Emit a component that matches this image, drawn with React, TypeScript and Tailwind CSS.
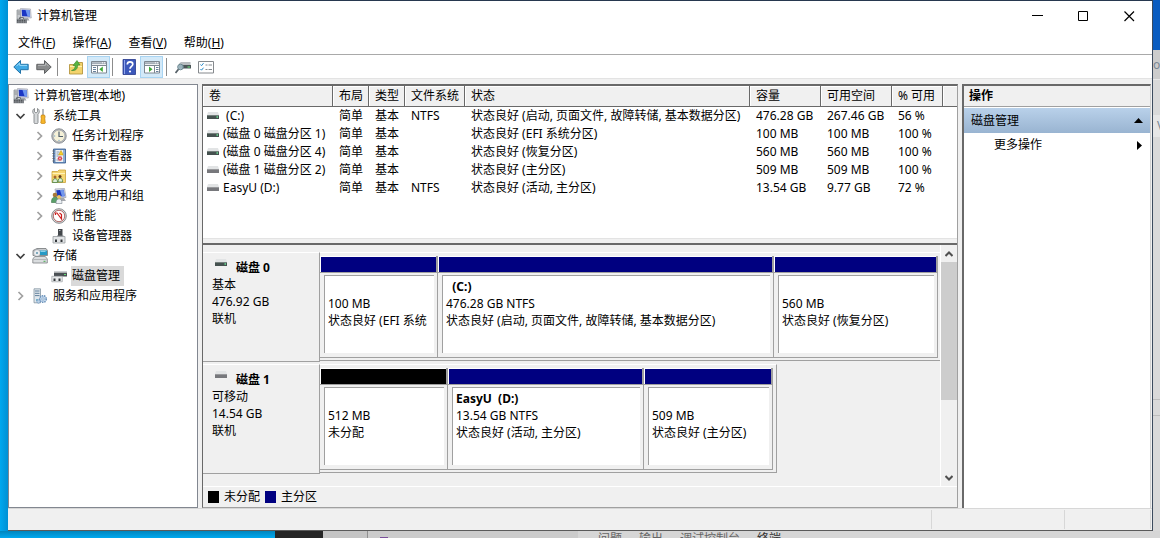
import type { ReactNode } from "react";

type IconName =
  | "computer"
  | "tools"
  | "clock"
  | "event"
  | "shared"
  | "users"
  | "perf"
  | "device"
  | "storage"
  | "disk"
  | "services";

type TreeItem = {
  label: string;
  icon: IconName;
  level: number;
  state?: "open" | "closed";
  selected?: boolean;
};

type Volume = {
  name: string;
  removable?: boolean;
  fs: string;
  status: string;
  capacity: string;
  free: string;
  percent: string;
};

type PartitionInfo = {
  title?: string;
  size: string;
  status: string;
  unallocated?: boolean;
};

const menus = [
  { label: "文件", key: "F" },
  { label: "操作", key: "A" },
  { label: "查看", key: "V" },
  { label: "帮助", key: "H" },
];

const tree: TreeItem[] = [
  { label: "计算机管理(本地)", icon: "computer", level: 0 },
  { label: "系统工具", icon: "tools", level: 1, state: "open" },
  { label: "任务计划程序", icon: "clock", level: 2, state: "closed" },
  { label: "事件查看器", icon: "event", level: 2, state: "closed" },
  { label: "共享文件夹", icon: "shared", level: 2, state: "closed" },
  { label: "本地用户和组", icon: "users", level: 2, state: "closed" },
  { label: "性能", icon: "perf", level: 2, state: "closed" },
  { label: "设备管理器", icon: "device", level: 2 },
  { label: "存储", icon: "storage", level: 1, state: "open" },
  { label: "磁盘管理", icon: "disk", level: 2, selected: true },
  { label: "服务和应用程序", icon: "services", level: 1, state: "closed" },
];

const columns = ["卷", "布局", "类型", "文件系统", "状态", "容量", "可用空间", "% 可用", ""];

const volumes: Volume[] = [
  { name: " (C:)", fs: "NTFS", status: "状态良好 (启动, 页面文件, 故障转储, 基本数据分区)", capacity: "476.28 GB", free: "267.46 GB", percent: "56 %" },
  { name: "(磁盘 0 磁盘分区 1)", fs: "", status: "状态良好 (EFI 系统分区)", capacity: "100 MB", free: "100 MB", percent: "100 %" },
  { name: "(磁盘 0 磁盘分区 4)", fs: "", status: "状态良好 (恢复分区)", capacity: "560 MB", free: "560 MB", percent: "100 %" },
  { name: "(磁盘 1 磁盘分区 2)", removable: true, fs: "", status: "状态良好 (主分区)", capacity: "509 MB", free: "509 MB", percent: "100 %" },
  { name: "EasyU (D:)", removable: true, fs: "NTFS", status: "状态良好 (活动, 主分区)", capacity: "13.54 GB", free: "9.77 GB", percent: "72 %" },
];

const disk0: PartitionInfo[] = [
  { size: "100 MB", status: "状态良好 (EFI 系统" },
  { title: "  (C:)", size: "476.28 GB NTFS", status: "状态良好 (启动, 页面文件, 故障转储, 基本数据分区)" },
  { size: "560 MB", status: "状态良好 (恢复分区)" },
];

const disk1: PartitionInfo[] = [
  { size: "512 MB", status: "未分配", unallocated: true },
  { title: "EasyU  (D:)", size: "13.54 GB NTFS", status: "状态良好 (活动, 主分区)" },
  { size: "509 MB", status: "状态良好 (主分区)" },
];

function Svg({ children }: { children: ReactNode }) {
  return (
    <svg width="16" height="16" viewBox="0 0 16 16" className="shrink-0" aria-hidden="true">
      {children}
    </svg>
  );
}

function ComputerIcon() {
  return (
    <Svg>
      <path d="M1 2h3.500v9H1z" fill="#c9ccd0" stroke="#85898e" strokeWidth=".7" />
      <path d="M1.500 4h2.500M1.500 6h2.500" stroke="#73777c" strokeWidth=".7" />
      <path d="M4.500.5 14.500 1l.8 9-10.300-.5z" fill="#d8dbe4" stroke="#9a9eaa" strokeWidth=".6" />
      <path d="M5.700 1.800 13.500 2l.6 6.500-8-.3z" fill="#1b36c4" />
      <path d="m9.500 2 4 .1.600 6.400-2.600-.2z" fill="#6f97f0" />
      <path d="M8 10h4l1.500 2.500H8z" fill="#a4a8ae" />
      <path d="M.5 11h10.500v4.300H.5z" fill="#8d9196" />
      <path d="M1 12.300h9.500M1 14h9.500" stroke="#42464a" strokeDasharray="1.500 .8" />
      <path d="M3.500 10.800v-1h4v1" fill="none" stroke="#55595e" />
    </Svg>
  );
}

function TreeIcon({ name }: { name: IconName }) {
  switch (name) {
    case "computer":
      return <ComputerIcon />;
    case "tools":
      return (
        <Svg>
          <path d="M2.500.5v3.300L4 5l1.500-1.200V.5C7.500 1.500 8 4.500 6 6.300V14.500a2 1.300 0 0 1-4 0V6.300C0 4.500.5 1.500 2.500.5z" fill="#d5d8da" stroke="#777b7e" strokeWidth=".8" />
          <path d="M11 1v6.500" stroke="#8f9396" strokeWidth="1.300" />
          <path d="M9.500 7h3l.7 2-.5 1 .6 5a2.300 1 0 0 1-4.500 0l.6-5-.5-1z" fill="#f5b52a" stroke="#c07c0c" strokeWidth=".7" />
        </Svg>
      );
    case "clock":
      return (
        <Svg>
          <circle cx="8" cy="8" r="7.200" fill="#b5b9bd" stroke="#8d9195" strokeWidth="1" />
          <circle cx="8" cy="8" r="5.800" fill="#f5f1d8" stroke="#a2a5aa" strokeWidth=".6" />
          <path d="M8 3.500v5h4" fill="none" stroke="#51606e" strokeWidth="1.200" />
          <path d="M8 13v-1.200M3 8h1.200" stroke="#6aa0c8" />
        </Svg>
      );
    case "event":
      return (
        <Svg>
          <path d="M2.500 1h12v14h-12z" fill="#6e93c4" stroke="#365b8e" strokeWidth=".8" />
          <path d="M4.500 2h7.500v12H4.500z" fill="#eef2f4" />
          <path d="M1.500 3h2M1.500 5.500h2M1.500 8h2M1.500 10.500h2M1.500 13h2" stroke="#5f6468" />
          <path d="M5.500 4h3M5.500 6h2M5.500 8h2M5.500 12h2" stroke="#6a85a8" strokeWidth=".8" />
          <path d="m10 2.500 2.500 4.500h-5z" fill="#f6cf2b" stroke="#b58c0e" strokeWidth=".5" />
          <circle cx="9" cy="10.500" r="2.300" fill="#d43f4b" />
          <path d="m8 9.500 2 2m0-2-2 2" stroke="#fff" strokeWidth=".7" />
          <path d="M13 2v12" stroke="#b6cce6" />
        </Svg>
      );
    case "shared":
      return (
        <Svg>
          <path d="M1 3.500h5.500L8 2h6.500v12.500H1z" fill="#f6d672" stroke="#caa23a" strokeWidth=".8" />
          <path d="M1.500 5.500h12.500" stroke="#fff2ba" />
          <circle cx="4" cy="9" r="1.500" fill="#a7652e" />
          <circle cx="9" cy="8.500" r="1.500" fill="#653b1d" />
          <path d="M1.500 14.500c.3-3 1.300-3.800 2.800-3.800s2.200 1 2.200 3.800zM7 14c.3-3 1-3.800 2.400-3.800s2.200 1 2.200 3.800z" fill="#dfecd6" stroke="#377a3e" strokeWidth=".7" />
        </Svg>
      );
    case "users":
      return (
        <Svg>
          <path d="m4 1 9.500-.5 1.500 9-9.500.5z" fill="#dadee8" stroke="#969baa" strokeWidth=".7" />
          <path d="m5.200 2.200 7.500-.4 1 6.400-7.500.4z" fill="#1d39be" />
          <path d="m9 2 3.700-.2 1 6.400-2.700.2z" fill="#7297ec" />
          <path d="M9 10h4l2 3H9z" fill="#a5a8ad" />
          <circle cx="4" cy="7" r="2.300" fill="#a97a38" />
          <path d="M.5 14.500c0-4 1.300-5.300 3.500-5.300s3.500 1.300 3.500 5.300z" fill="#5aa069" stroke="#396e47" strokeWidth=".6" />
          <circle cx="8" cy="9" r="1.900" fill="#efc35a" />
          <path d="M5 15.500c0-3.500 1-4.600 3-4.600s3 1.100 3 4.600z" fill="#edf1f5" stroke="#7b858f" strokeWidth=".6" />
        </Svg>
      );
    case "perf":
      return (
        <Svg>
          <circle cx="8" cy="8" r="7.300" fill="#dcdcdc" stroke="#808284" strokeWidth=".9" />
          <circle cx="8" cy="8" r="5.700" fill="#fff" stroke="#a04a4a" strokeWidth=".8" />
          <path d="M4.500 7V5h1.500l4.500 6V6.500L8.500 5" fill="none" stroke="#cf2020" strokeWidth="1.200" />
        </Svg>
      );
    case "device":
      return (
        <Svg>
          <path d="M7 1h4.500v7H7z" fill="#43474b" />
          <path d="M8 2.500h1.500" stroke="#b3b7ba" />
          <path d="M6 7.500h6.500V9H6z" fill="#7c8084" />
          <path d="M2 8.500h12V15H2z" fill="#e2e4e6" stroke="#989c9f" strokeWidth=".8" />
          <path d="M4 11.500h2V14H4zM9.500 11.500h2V14h-2z" fill="#33373a" />
        </Svg>
      );
    case "storage":
      return (
        <Svg>
          <path d="M1 2.500 5 .5h9l1.500 2v5H1z" fill="#c8cbce" stroke="#73777a" strokeWidth=".8" />
          <circle cx="5" cy="5" r="3.500" fill="#e9ecef" stroke="#8f9498" strokeWidth=".7" />
          <circle cx="5" cy="5" r="1" fill="#5d95ac" />
          <path d="M8 2.500h7V7H8z" fill="#2599c5" />
          <path d="M8.500 3.300h5" stroke="#a4def3" />
          <path d="m.8 11 2-2.500h10.500l2 2.500v4H.8z" fill="#dadddf" stroke="#7d8184" strokeWidth=".8" />
          <path d="M1.500 11.500h13" stroke="#a8acaf" strokeWidth=".8" />
          <path d="M11.500 13.300h2" stroke="#4bae52" />
        </Svg>
      );
    case "disk":
      return (
        <Svg>
          <path d="M3 4.500h13v4H3z" fill="#4b5054" />
          <path d="M3 3.800h13" stroke="#b9bdc0" />
          <path d="M13 6.500h2" stroke="#66dd77" />
          <path d="M.8 8.300h10.500v5.500H.8z" fill="#e7e9ea" stroke="#a0a4a7" strokeWidth=".7" />
          <path d="M2.500 10.500h2V13h-2zM7.500 10.500h2V13h-2z" fill="#35393c" />
        </Svg>
      );
    case "services":
      return (
        <Svg>
          <path d="M2 .8h6.500v14H2z" fill="#dfe6ec" stroke="#8494a2" strokeWidth=".8" />
          <path d="M3 3h4.500M3 5.300h4.500M3 7.600h4.500" stroke="#62809c" />
          <circle cx="5" cy="12" r="1" fill="#56a5c4" />
          <circle cx="11" cy="11" r="3.300" fill="#c8dcf0" stroke="#6c93bb" strokeWidth="1.500" strokeDasharray="1.500 .8" />
          <circle cx="11" cy="11" r="1.200" fill="#fff" stroke="#6c93bb" strokeWidth=".7" />
          <circle cx="6.500" cy="13.500" r="1.700" fill="#bdd3e8" stroke="#6c93bb" strokeDasharray="1 .6" />
        </Svg>
      );
  }
}

function DriveIcon({ removable }: { removable?: boolean }) {
  return (
    <svg width="14" height="9" viewBox="0 0 14 9" className="shrink-0" aria-hidden="true">
      <path d="M2 0h10l1 3H1z" fill="#e2e4e5" />
      <path d="M1 3h12v4H1z" fill={removable ? "#77787c" : "#45514f"} />
      <path d="M1 3.500h12" stroke={removable ? "#98999c" : "#75807d"} />
      {!removable && <path d="M10.500 5h1.500" stroke="#6be396" strokeWidth="1.500" />}
    </svg>
  );
}

function Arrow({ back }: { back?: boolean }) {
  return (
    <Svg>
      <path
        d={back ? "M.8 8 7.500 1.500v3.800h7.700v5.400H7.500v3.800z" : "M15.200 8 8.500 1.500v3.800H.8v5.400h7.700v3.800z"}
        fill={back ? "#3fa9e4" : "#898b8c"}
        stroke={back ? "#2273a8" : "#5f6162"}
        strokeLinejoin="round"
      />
      <path d={back ? "M3.500 7.200 6.700 4v2.400h7.300" : "M2 6.400h7.500V4l3 3.200"} fill="none" stroke={back ? "#9bdbfa" : "#b3b5b6"} />
    </Svg>
  );
}

function PaneIcon({ right }: { right?: boolean }) {
  return (
    <Svg>
      <path d="M.5 2.500h15v11.500H.5z" fill="#fff" stroke="#7d8791" />
      <path d="M1 4.200h14" stroke="#a4adb7" strokeWidth="2" />
      <path d="M11 3.800h1M13 3.800h1" stroke="#fff" />
      <path d="M1 6.500h14" stroke="#7d8791" />
      <path d={right ? "M10.500 6.500V14" : "M6.500 6.500V14"} stroke="#7d8791" />
      <path d={right ? "M12 8.500h2.500M12 10.500h2.500M12 12.500h2.500" : "M2 8.500h3M2 10.500h3M2 12.500h3"} stroke="#67809b" />
      <path d={right ? "M5 7.500v5.500l3.500-2.700z" : "M11.800 7.500v5.500L8.300 10.300z"} fill="#3ca735" />
    </Svg>
  );
}

function FolderUpIcon() {
  return (
    <Svg>
      <path d="M1.500 5.500h5l1.500-2h6.500v11.500h-13z" fill="#f3d36c" stroke="#b59640" strokeWidth=".9" />
      <path d="M2 7.500h12" stroke="#fff0b0" />
      <path d="M3.500 11.500c2.700-.8 3.600-2.300 3.700-5H5l4-5L12 6H9.700c0 4-2.200 6-6.200 5.500z" fill="#58b543" stroke="#388529" strokeWidth=".6" />
    </Svg>
  );
}

function HelpIcon() {
  return (
    <Svg>
      <path d="M2 .5h12.500v15H2z" fill="#3c58bb" stroke="#27398b" strokeWidth=".8" />
      <path d="M3.500 1v14" stroke="#8ea4ec" />
      <path d="M6.300 5.500C6.300 2 11.800 2.200 11.800 5.300c0 2-2.800 2.200-2.800 4.500" fill="none" stroke="#fff" strokeWidth="1.700" />
      <circle cx="9" cy="12.500" r="1.100" fill="#fff" />
    </Svg>
  );
}

function ProbeIcon() {
  return (
    <Svg>
      <path d="M4 4.500 6 3h9.500v6H5z" fill="#b9bdc0" />
      <path d="M4 6h12v3.500H4z" fill="#4c5658" />
      <path d="M12.500 8h2.500" stroke="#64c978" strokeWidth="1.300" />
      <circle cx="5.500" cy="8" r="2.800" fill="#a3bdc7" fillOpacity=".9" stroke="#6b8790" />
      <path d="m3.500 10.200-3 3.800" stroke="#535e65" strokeWidth="1.700" />
    </Svg>
  );
}

function ChecklistIcon() {
  return (
    <Svg>
      <path d="M.5 2.500h15v11.500H.5z" fill="#fff" stroke="#85898d" />
      <path d="m2.500 5.500 1 1.200 2-2.500M2.500 10l1 1.200 2-2.500" fill="none" stroke="#258bcc" />
      <path d="M7.500 6h2M10.500 6h3.500M7.500 10.500h2M10.500 10.500h3.500" stroke="#858b90" />
    </Svg>
  );
}

function Chevron({ open }: { open: boolean }) {
  return (
    <svg width="11" height="10" viewBox="0 0 11 10" aria-hidden="true">
      <path d={open ? "M1.500 3l4 4 4-4" : "M3.500 1l4 4-4 4"} fill="none" stroke={open ? "#404040" : "#a0a0a0"} strokeWidth="1.700" />
    </svg>
  );
}

function ToolButton({ label, active, children }: { label: string; active?: boolean; children: ReactNode }) {
  return (
    <button
      aria-label={label}
      className={`flex h-[22px] w-[23px] shrink-0 items-center justify-center border ${
        active ? "border-[#a8d4f2] bg-[#d3e9f8]" : "border-transparent"
      }`}
    >
      {children}
    </button>
  );
}

function Separator() {
  return <span className="h-[18px] w-px shrink-0 bg-[#8c8c8c]" />;
}

function TreeRow({ item }: { item: TreeItem }) {
  const indent = item.level === 0 ? "pl-1" : item.level === 1 ? "pl-[6px]" : "pl-[25px]";
  return (
    <li className={`flex h-5 items-center ${indent}`}>
      {item.level > 0 && (
        <span className="flex w-[17px] shrink-0">
          {item.state && (
            <button aria-label={`展开或折叠 ${item.label}`}>
              <Chevron open={item.state === "open"} />
            </button>
          )}
        </span>
      )}
      <button className="flex h-5 items-center gap-1">
        <TreeIcon name={item.icon} />
        <span className={`flex h-5 items-center whitespace-nowrap pl-px pr-1 ${item.selected ? "bg-[#d9d9d9]" : ""}`}>
          {item.label}
        </span>
      </button>
    </li>
  );
}

function VolumeTable() {
  return (
    <table className="w-full table-fixed border-separate border-spacing-0 text-left">
      <colgroup>
        <col className="w-[130px]" />
        <col className="w-[36px]" />
        <col className="w-[36px]" />
        <col className="w-[60px]" />
        <col className="w-[285px]" />
        <col className="w-[71px]" />
        <col className="w-[71px]" />
        <col className="w-[51px]" />
        <col />
      </colgroup>
      <thead>
        <tr className="h-[21px] bg-[#f0f0f0]">
          {columns.map((column) => (
            <th
              key={column}
              className="whitespace-nowrap border-b border-r border-[#696969] p-0 pl-[6px] font-normal shadow-[inset_1px_1px_0_#fff] last:border-r-0"
            >
              {column}
            </th>
          ))}
        </tr>
      </thead>
      <tbody>
        {volumes.map((volume) => (
          <tr key={volume.name} className="h-[18px] whitespace-nowrap leading-[18px]">
            <td className="p-0">
              <span className="flex items-center gap-[3px] whitespace-pre pl-[3px]">
                <DriveIcon removable={volume.removable} />
                {volume.name}
              </span>
            </td>
            <td className="p-0 pl-[6px]">简单</td>
            <td className="p-0 pl-[6px]">基本</td>
            <td className="p-0 pl-[6px]">{volume.fs}</td>
            <td className="p-0 pl-[6px]">{volume.status}</td>
            <td className="p-0 pl-[6px]">{volume.capacity}</td>
            <td className="p-0 pl-[6px]">{volume.free}</td>
            <td className="p-0 pl-[6px]">{volume.percent}</td>
            <td className="p-0" />
          </tr>
        ))}
      </tbody>
    </table>
  );
}

function Partition({ part }: { part: PartitionInfo }) {
  return (
    <div className="min-w-0 border-b border-r border-[#a0a0a0]">
      <div className="border-b border-r border-[#a0a0a0]">
        <div className={`h-4 border-l border-t border-white ${part.unallocated ? "bg-black" : "bg-[#000080]"}`} />
      </div>
      <div className="pb-1 pl-1 pr-[3px] pt-[2px]">
        <div className="h-[78px] overflow-hidden whitespace-pre border-l border-t border-[#a0a0a0] bg-white pl-[3px] pt-[2px] leading-[17px]">
          <p className="h-[17px] font-bold">{part.title}</p>
          <p>{part.size}</p>
          <p>{part.status}</p>
        </div>
      </div>
    </div>
  );
}

function DiskRow({
  name,
  kind,
  size,
  removable,
  children,
}: {
  name: string;
  kind: string;
  size: string;
  removable?: boolean;
  children: ReactNode;
}) {
  return (
    <section className="flex h-[112px] pt-[2px]">
      <div className="w-[117px] shrink-0 border-b border-r border-t border-b-[#a0a0a0] border-r-[#a0a0a0] border-t-white pl-[9px] pt-[6px] leading-[17px]">
        <h2 className="flex gap-2 font-bold">
          <span className="pl-[2px]">
            <DriveIcon removable={removable} />
          </span>
          {name}
        </h2>
        <p>{kind}</p>
        <p>{size}</p>
        <p>联机</p>
      </div>
      {children}
    </section>
  );
}

function DiskView() {
  return (
    <div className="flex min-h-0 flex-1">
      <div className="min-w-0 flex-1 overflow-hidden border-r border-white pt-[5px]">
        <DiskRow name="磁盘 0" kind="基本" size="476.92 GB">
          <div className="mb-px flex-1 border-b border-t border-b-[#a0a0a0] border-t-white pb-[3px] pr-[2px] pt-[3px]">
            <div className="grid grid-cols-[118fr_336fr_164fr]">
              {disk0.map((part) => (
                <Partition key={part.size} part={part} />
              ))}
            </div>
          </div>
        </DiskRow>
        <DiskRow name="磁盘 1" kind="可移动" size="14.54 GB" removable>
          <div className="mb-px w-[457px] border-b border-r border-t border-b-[#a0a0a0] border-r-[#a0a0a0] border-t-white pb-[3px] pr-[3px] pt-[3px]">
            <div className="grid grid-cols-[128fr_196fr_129fr]">
              {disk1.map((part) => (
                <Partition key={part.size} part={part} />
              ))}
            </div>
          </div>
        </DiskRow>
      </div>
      <div className="flex w-4 shrink-0 flex-col">
        <button aria-label="向上滚动" className="flex h-[17px] items-center justify-center">
          <svg width="8" height="6" viewBox="0 0 8 6" aria-hidden="true">
            <path d="M.5 5 4 1.500 7.500 5" fill="none" stroke="#505050" strokeWidth="2" />
          </svg>
        </button>
        <div className="flex-1">
          <div className="h-2/3 bg-[#cdcdcd]" />
        </div>
        <button aria-label="向下滚动" className="flex h-[17px] items-center justify-center">
          <svg width="8" height="6" viewBox="0 0 8 6" aria-hidden="true">
            <path d="M.5 1 4 4.500 7.500 1" fill="none" stroke="#505050" strokeWidth="2" />
          </svg>
        </button>
      </div>
    </div>
  );
}

function TitleBar() {
  return (
    <header className="flex h-[30px] shrink-0 items-center bg-white pl-2">
      <ComputerIcon />
      <h1 className="flex-1 pl-[5px]">计算机管理</h1>
      <button aria-label="最小化" className="flex h-full w-[46px] items-center justify-center">
        <svg width="11" height="11" viewBox="0 0 11 11" aria-hidden="true">
          <path d="M0 4.500h11" stroke="#000" />
        </svg>
      </button>
      <button aria-label="最大化" className="flex h-full w-[46px] items-center justify-center">
        <svg width="11" height="11" viewBox="0 0 11 11" aria-hidden="true">
          <path d="M.5.5h9v9h-9z" fill="none" stroke="#000" />
        </svg>
      </button>
      <button aria-label="关闭" className="flex h-full w-[46px] items-center justify-center">
        <svg width="11" height="11" viewBox="0 0 11 11" aria-hidden="true">
          <path d="m.5.5 9.500 9.500m0-9.500L.5 10" stroke="#000" strokeWidth="1.200" />
        </svg>
      </button>
    </header>
  );
}

function Toolbar() {
  return (
    <div className="flex h-6 shrink-0 items-center border-b border-[#e3e3e3] bg-white pl-px pt-px">
      <ToolButton label="后退">
        <Arrow back />
      </ToolButton>
      <ToolButton label="前进">
        <Arrow />
      </ToolButton>
      <span className="flex items-center gap-[6px] pl-[2px]">
        <Separator />
        <ToolButton label="上一级">
          <FolderUpIcon />
        </ToolButton>
      </span>
      <ToolButton label="显示/隐藏控制台树" active>
        <PaneIcon />
      </ToolButton>
      <span className="flex items-center gap-1 pl-[2px]">
        <Separator />
        <ToolButton label="帮助">
          <HelpIcon />
        </ToolButton>
      </span>
      <ToolButton label="显示/隐藏操作窗格" active>
        <PaneIcon right />
      </ToolButton>
      <span className="flex items-center gap-1 pl-[3px]">
        <Separator />
        <ToolButton label="重新扫描磁盘">
          <ProbeIcon />
        </ToolButton>
      </span>
      <ToolButton label="属性">
        <ChecklistIcon />
      </ToolButton>
    </div>
  );
}

export default function App() {
  return (
    <div className="flex h-screen flex-col overflow-hidden bg-[#00a2e8] font-['Noto_Sans','Noto_Sans_CJK_SC',sans-serif] text-[12px] leading-4 text-black">
      <div className="flex min-h-0 flex-1">
        <div className="w-2 shrink-0 bg-linear-to-r from-[#00a8ef] to-[#0090d4]" />
        <main className="flex min-w-0 flex-1 flex-col border-b border-r border-t border-b-[#5a5a5a] border-r-[#3c4b5e] border-t-[#27384f] bg-[#f0f0f0]">
          <TitleBar />
          <nav className="flex h-6 shrink-0 items-center gap-[17px] border-b border-[#a9a9a9] bg-white pl-[10px]">
            {menus.map((menu) => (
              <button key={menu.key}>
                {menu.label}(<u>{menu.key}</u>)
              </button>
            ))}
          </nav>
          <Toolbar />

          <div className="flex min-h-0 flex-1 pr-px pt-[5px]">
            <aside className="w-[190px] shrink-0 border border-[#828790] bg-white pt-px">
              <ul>
                {tree.map((item) => (
                  <TreeRow key={item.label} item={item} />
                ))}
              </ul>
            </aside>

            <div className="ml-1 flex min-w-0 flex-1 flex-col border-b border-l border-r border-t-2 border-b-[#a0a0a0] border-l-[#696969] border-r-[#a0a0a0] border-t-[#696969]">
              <div className="h-[152px] shrink-0 overflow-hidden bg-white">
                <VolumeTable />
              </div>
              <div className="h-[7px] shrink-0 border-b-2 border-t border-b-[#696969] border-t-[#e3e3e3] bg-[#f0f0f0]" />
              <DiskView />
              <footer className="flex h-[21px] shrink-0 items-center gap-[5px] border-t border-white pl-[5px]">
                <span className="h-3 w-[11px] bg-black" />
                <span>未分配</span>
                <span className="h-3 w-[11px] bg-[#000080]" />
                <span>主分区</span>
              </footer>
            </div>

            <aside className="ml-1 w-[189px] shrink-0 border-l-2 border-r border-t-2 border-l-[#696969] border-r-[#d0d0d0] border-t-[#696969] bg-white">
              <h2 className="flex h-[21px] items-center border-b border-[#a0a0a0] bg-[#f0f0f0] pl-[5px] font-bold">操作</h2>
              <button className="mt-px flex h-[25px] w-full items-center justify-between bg-linear-to-b from-[#b9d1ea] to-[#99b4d1] pl-[7px] pr-[7px]">
                磁盘管理
                <svg width="9" height="5" viewBox="0 0 9 5" aria-hidden="true">
                  <path d="M0 5 4.500 0 9 5z" />
                </svg>
              </button>
              <button className="flex h-6 w-full items-center justify-between pl-[30px] pr-2">
                更多操作
                <svg width="5" height="9" viewBox="0 0 5 9" aria-hidden="true">
                  <path d="M0 0v9l5-4.500z" />
                </svg>
              </button>
            </aside>
          </div>

          <div className="flex h-[22px] shrink-0 justify-end border-t border-[#d7d7d7] py-px pr-px">
            <span className="w-[133px] border-l border-[#d7d7d7]" />
            <span className="w-[87px] border-l border-r border-[#d7d7d7]" />
          </div>
        </main>
        <div className="flex w-[7px] shrink-0 flex-col overflow-hidden bg-[#d9d9d9] text-[#7b8794]">
          <div className="h-[50px] shrink-0 bg-[#0a5cc0]" />
          <div className="flex h-[30px] shrink-0 items-center border-b border-[#e8e8e8] bg-[#cccccc]">o</div>
          <div className="h-[35px] shrink-0" />
          <div className="flex h-[22px] shrink-0 items-center bg-[#e6e6e6] pl-1">V</div>
          <div className="h-[263px] shrink-0 border-b border-[#bdbdbd]" />
          <div className="h-[16px] shrink-0 border-b border-[#bdbdbd]" />
        </div>
      </div>
      <div className="flex h-[7px] shrink-0 overflow-hidden bg-[#d6d6d6] text-[#666666]">
        <div className="w-[275px] shrink-0 bg-linear-to-b from-[#0085bd] to-[#00a8ef]" />
        <div className="w-12 shrink-0 bg-[#252525]" />
        <div className="w-[45px] shrink-0 border-r border-[#8f8f8f] bg-[#c4c4c4]" />
        <div className="flex w-[210px] shrink-0 items-end bg-[#cbcbcb] pl-3">
          <span className="h-px w-2 bg-[#7a4f9a]" />
        </div>
        <div className="flex gap-[17px] whitespace-nowrap pl-5">
          <span>问题</span>
          <span>输出</span>
          <span>调试控制台</span>
          <span className="text-[#333333]">终端</span>
        </div>
      </div>
    </div>
  );
}
